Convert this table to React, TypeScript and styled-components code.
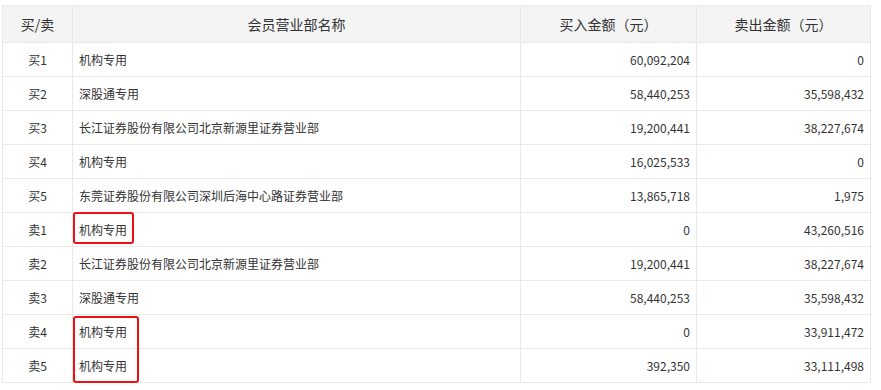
import React from 'react'
import styled, { createGlobalStyle } from 'styled-components'

const GlobalStyle = createGlobalStyle`
  html, body {
    margin: 0;
    padding: 0;
    background: #fff;
  }
  body {
    font-family: "Noto Sans CJK SC", "Noto Sans", sans-serif;
    color: #333;
  }
`

const Wrap = styled.div`
  position: relative;
  width: 869px;
  margin: 5px 0 0 2px;
`

const Table = styled.table`
  width: 869px;
  border-collapse: collapse;
  table-layout: fixed;
`

const HeadCell = styled.th`
  height: 36px;
  padding: 0 6px;
  background: #f4f4f4;
  border: 1px solid #e8e8e8;
  font-size: 14px;
  font-weight: normal;
  color: #333;
  text-align: center;
`

const Cell = styled.td<{ $align?: 'left' | 'center' | 'right' }>`
  height: 33px;
  padding: 0 6px;
  border: 1px solid #e8e8e8;
  font-size: 12px;
  color: #333;
  text-align: ${p => p.$align || 'left'};
  white-space: nowrap;
`

const Mark = styled.div<{ $left: number; $top: number; $w: number; $h: number }>`
  position: absolute;
  left: ${p => p.$left}px;
  top: ${p => p.$top}px;
  width: ${p => p.$w}px;
  height: ${p => p.$h}px;
  box-sizing: border-box;
  border: 2px solid #f01010;
  border-radius: 3px;
  pointer-events: none;
`

type Row = { side: string; name: string; buy: string; sell: string }

const rows: Row[] = [
  { side: '买1', name: '机构专用', buy: '60,092,204', sell: '0' },
  { side: '买2', name: '深股通专用', buy: '58,440,253', sell: '35,598,432' },
  { side: '买3', name: '长江证券股份有限公司北京新源里证券营业部', buy: '19,200,441', sell: '38,227,674' },
  { side: '买4', name: '机构专用', buy: '16,025,533', sell: '0' },
  { side: '买5', name: '东莞证券股份有限公司深圳后海中心路证券营业部', buy: '13,865,718', sell: '1,975' },
  { side: '卖1', name: '机构专用', buy: '0', sell: '43,260,516' },
  { side: '卖2', name: '长江证券股份有限公司北京新源里证券营业部', buy: '19,200,441', sell: '38,227,674' },
  { side: '卖3', name: '深股通专用', buy: '58,440,253', sell: '35,598,432' },
  { side: '卖4', name: '机构专用', buy: '0', sell: '33,911,472' },
  { side: '卖5', name: '机构专用', buy: '392,350', sell: '33,111,498' },
]

const App = () => {
  return (
    <>
      <GlobalStyle />
      <Wrap>
        <Table>
          <colgroup>
            <col style={{ width: 70 }} />
            <col style={{ width: 448 }} />
            <col style={{ width: 176 }} />
            <col style={{ width: 174 }} />
          </colgroup>
          <thead>
            <tr>
              <HeadCell>买/卖</HeadCell>
              <HeadCell>会员营业部名称</HeadCell>
              <HeadCell>买入金额（元）</HeadCell>
              <HeadCell>卖出金额（元）</HeadCell>
            </tr>
          </thead>
          <tbody>
            {rows.map((r, i) => (
              <tr key={i}>
                <Cell $align="center">{r.side}</Cell>
                <Cell>{r.name}</Cell>
                <Cell $align="right">{r.buy}</Cell>
                <Cell $align="right">{r.sell}</Cell>
              </tr>
            ))}
          </tbody>
        </Table>
        <Mark $left={71} $top={207} $w={61} $h={32} />
        <Mark $left={71} $top={311} $w={66} $h={67} />
      </Wrap>
    </>
  )
}

export default App
